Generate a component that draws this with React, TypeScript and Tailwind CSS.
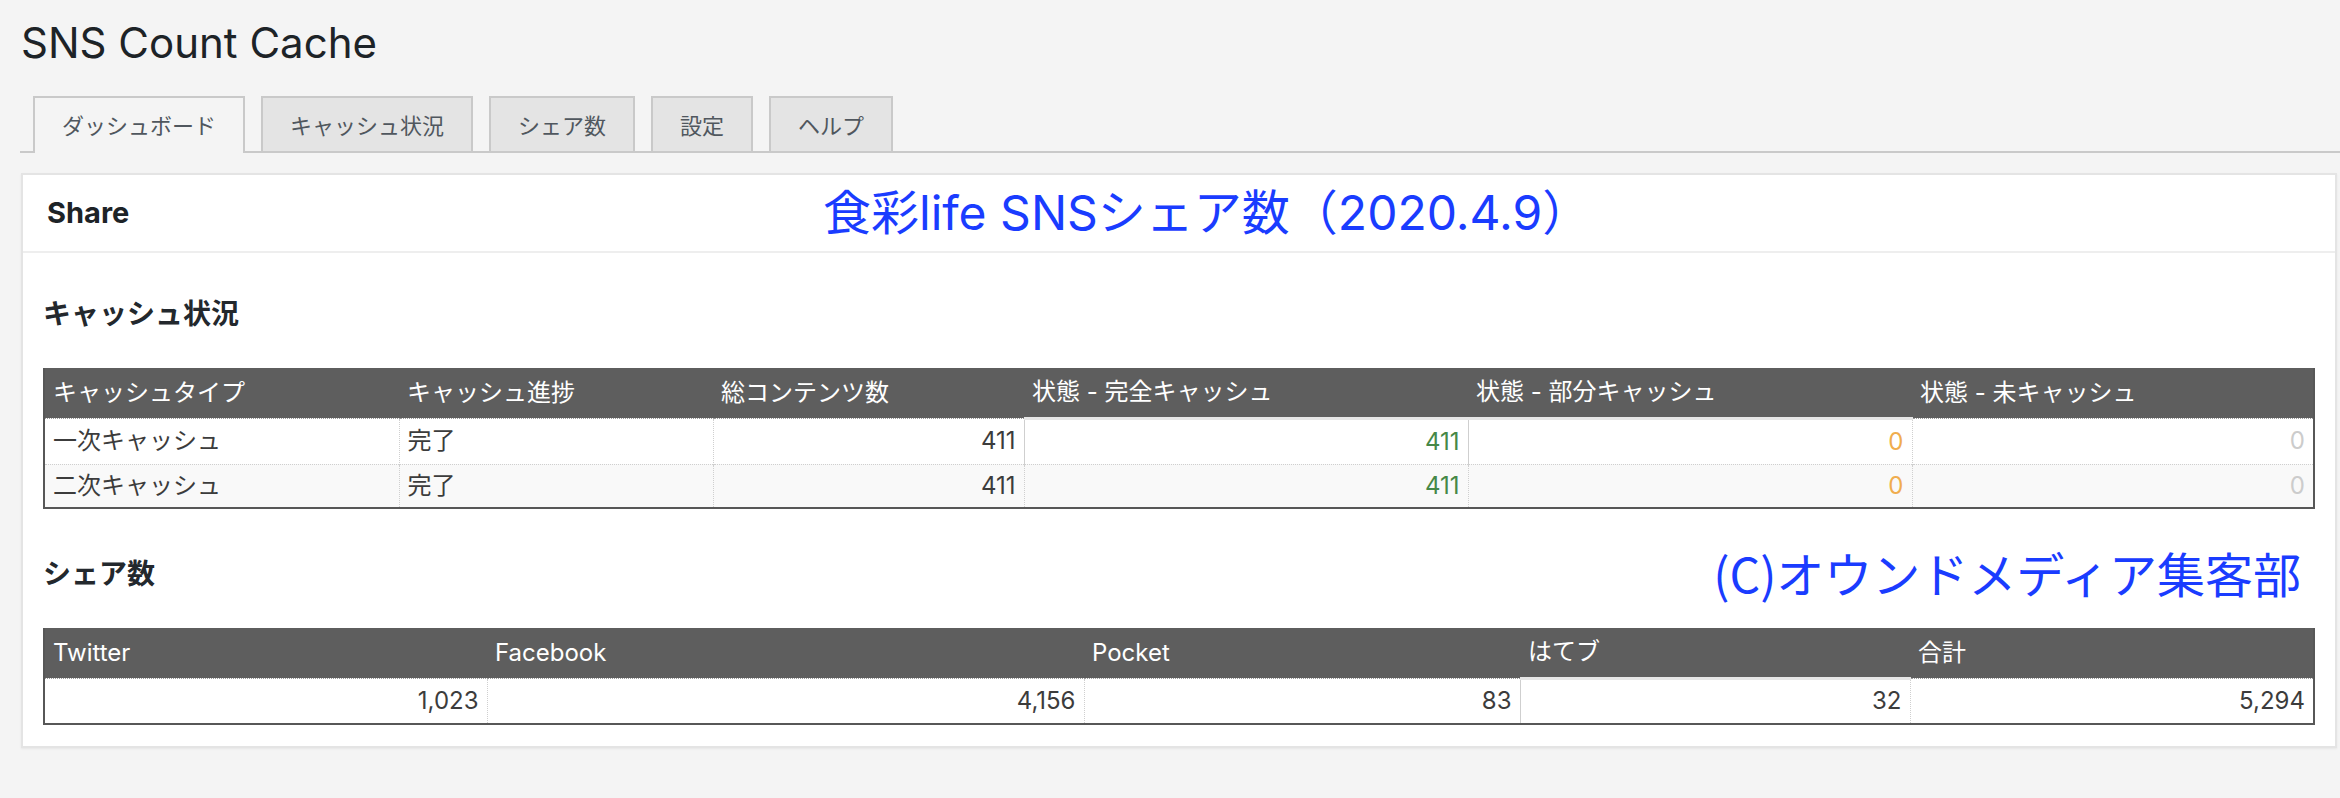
const tabs = ['ダッシュボード', 'キャッシュ状況', 'シェア数', '設定', 'ヘルプ'];

type Cell = { v: string; tone?: 'green' | 'orange' | 'gray'; num?: boolean };

const cacheCols = [
  { label: 'キャッシュタイプ', w: 'w-[354px]' },
  { label: 'キャッシュ進捗', w: 'w-[314px]' },
  { label: '総コンテンツ数', w: 'w-[311px]' },
  { label: '状態 - 完全キャッシュ', w: 'w-[444px]' },
  { label: '状態 - 部分キャッシュ', w: 'w-[444px]' },
  { label: '状態 - 未キャッシュ', w: 'w-[401px]' },
];

const cacheRows: Cell[][] = [
  [
    { v: '一次キャッシュ' },
    { v: '完了' },
    { v: '411', num: true },
    { v: '411', num: true, tone: 'green' },
    { v: '0', num: true, tone: 'orange' },
    { v: '0', num: true, tone: 'gray' },
  ],
  [
    { v: '二次キャッシュ' },
    { v: '完了' },
    { v: '411', num: true },
    { v: '411', num: true, tone: 'green' },
    { v: '0', num: true, tone: 'orange' },
    { v: '0', num: true, tone: 'gray' },
  ],
];

const shareCols = [
  { label: 'Twitter', w: 'w-[442px]', v: '1,023' },
  { label: 'Facebook', w: 'w-[597px]', v: '4,156' },
  { label: 'Pocket', w: 'w-[436px]', v: '83' },
  { label: 'はてブ', w: 'w-[390px]', v: '32' },
  { label: '合計', w: 'w-[403px]', v: '5,294' },
];

function toneClass(tone?: Cell['tone']) {
  if (tone === 'green') return 'text-[#468847]';
  if (tone === 'orange') return 'text-[#f0ad4e]';
  if (tone === 'gray') return 'text-[#cccccc]';
  return 'text-[#3c3c3c]';
}

export default function App() {
  return (
    <div className="min-h-screen bg-[#f4f4f4] font-[family-name:Inter,'Noto_Sans_CJK_JP',sans-serif] pt-[15px]">
      <h1 className="pl-[21px] text-[42px] leading-[56px] text-[#1d2327]">SNS Count Cache</h1>

      {/* tabs */}
      <div className="mt-[25px] ml-[20px] pl-[13px] flex items-end gap-[16px] border-b-2 border-[#c9c9c9]">
        {tabs.map((t, i) =>
          i === 0 ? (
            <div
              key={t}
              className="h-[57px] -mb-[2px] px-[27px] pb-[2px] flex items-center border-2 border-b-0 border-[#c9c9c9] bg-[#f4f4f4] text-[22px] text-[#50575e] font-['Noto_Sans_CJK_JP']"
            >
              {t}
            </div>
          ) : (
            <div
              key={t}
              className="h-[55px] px-[27px] flex items-center border-2 border-b-0 border-[#c9c9c9] bg-[#e4e4e4] text-[22px] text-[#50575e] font-['Noto_Sans_CJK_JP']"
            >
              {t}
            </div>
          )
        )}
      </div>

      {/* panel */}
      <div className="mt-[20px] ml-[21px] mr-[3px] bg-white border-2 border-[#e4e4e4] shadow-[0_1px_2px_rgba(0,0,0,0.06)]">
        <div className="h-[78px] px-[24px] flex items-center border-b-2 border-[#eeeeee]">
          <div className="w-[776px] text-[29px] font-bold text-[#1d2327]">Share</div>
          <div className="text-[48px] leading-[56px] text-[#1a3cff]">食彩life SNSシェア数（2020.4.9）</div>
        </div>

        <div className="px-[20px] pt-[39px] pb-[21px]">
          <h3 className="text-[28px] leading-[40px] font-bold text-[#23282d] font-['Noto_Sans_CJK_JP']">キャッシュ状況</h3>

          <div className="mt-[36px] border-x-2 border-b-2 border-[#575757]">
            <table className="w-full table-fixed border-collapse text-[24px]">
              <colgroup>
                {cacheCols.map((c) => (
                  <col key={c.label} className={c.w} />
                ))}
              </colgroup>
              <thead>
                <tr className="bg-[#5e5e5e] text-white">
                  {cacheCols.map((c) => (
                    <th key={c.label} className="h-[50px] px-[8px] text-left font-normal">
                      {c.label}
                    </th>
                  ))}
                </tr>
              </thead>
              <tbody>
                {cacheRows.map((row, ri) => (
                  <tr key={ri} className={ri === 0 ? 'bg-white' : 'bg-[#f9f9f9]'}>
                    {row.map((c, ci) => (
                      <td
                        key={ci}
                        className={`${ri === 0 ? 'h-[46px]' : 'h-[43px]'} px-[8px] py-0 ${
                          c.num ? 'text-right' : 'text-left'
                        } ${toneClass(c.tone)} ${ci > 0 ? 'border-l border-dotted border-l-[#cfcfcf]' : ''} ${
                          ri === 0 && (ci === 3 || ci === 4)
                            ? 'border-t-[3px] border-solid border-t-[#e6e6e6]'
                            : ri === 0
                            ? 'border-t border-dotted border-t-[#9a9a9a]'
                            : 'border-t border-dotted border-t-[#cfcfcf]'
                        }`}
                      >
                        {c.v}
                      </td>
                    ))}
                  </tr>
                ))}
              </tbody>
            </table>
          </div>

          <div className="mt-[35px] h-[56px] flex items-center justify-between pr-[14px]">
            <h3 className="text-[28px] leading-[40px] font-bold text-[#23282d] font-['Noto_Sans_CJK_JP']">シェア数</h3>
            <div className="text-[48px] leading-[56px] text-[#1a3cff] font-['Noto_Sans_CJK_JP']">(C)オウンドメディア集客部</div>
          </div>

          <div className="mt-[28px] border-x-2 border-b-2 border-[#575757]">
            <table className="w-full table-fixed border-collapse text-[24px]">
              <colgroup>
                {shareCols.map((c) => (
                  <col key={c.label} className={c.w} />
                ))}
              </colgroup>
              <thead>
                <tr className="bg-[#5e5e5e] text-white">
                  {shareCols.map((c) => (
                    <th key={c.label} className="h-[50px] px-[8px] text-left font-normal">
                      {c.label}
                    </th>
                  ))}
                </tr>
              </thead>
              <tbody>
                <tr className="bg-white">
                  {shareCols.map((c, ci) => (
                    <td
                      key={c.label}
                      className={`h-[45px] px-[8px] py-0 text-right text-[#3c3c3c] ${
                        ci > 0 ? 'border-l border-dotted border-l-[#cfcfcf]' : ''
                      } ${
                        ci === 3
                          ? 'border-t-[3px] border-solid border-t-[#e6e6e6]'
                          : 'border-t border-dotted border-t-[#9a9a9a]'
                      }`}
                    >
                      {c.v}
                    </td>
                  ))}
                </tr>
              </tbody>
            </table>
          </div>
        </div>
      </div>
    </div>
  );
}
